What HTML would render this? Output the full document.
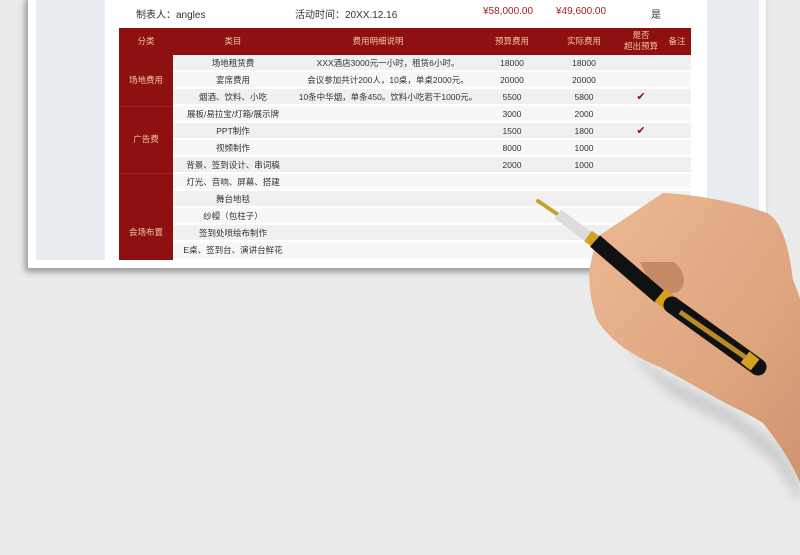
<!DOCTYPE html>
<html><head><meta charset="utf-8"><style>
*{margin:0;padding:0;box-sizing:border-box}
body{width:800px;height:555px;overflow:hidden;background:#ebebeb;position:relative;font-family:"Liberation Sans","Noto Sans CJK SC",sans-serif}
.a{position:absolute}
.paper{left:28px;top:-5px;width:738px;height:273px;background:#fff;box-shadow:-3px 4px 6px rgba(0,0,0,.35)}
.side{background:#e9edf1;top:0;height:260px}
.t{font-size:9px;color:#333;text-align:center;white-space:nowrap}
.hd{color:#f2c79c;font-size:8.5px;text-align:center;line-height:11px}
.row{left:173px;width:518px;height:16px;border-bottom:1px solid #fff}
.c{position:absolute;top:0;line-height:16px;font-size:8.5px;color:#333;text-align:center;white-space:nowrap}
.chk{color:#8e1010;font-size:11px}
</style></head><body>
<div class="a paper"></div>
<div class="a side" style="left:36px;width:69px"></div>
<div class="a side" style="left:707px;width:52px"></div>
<div class="a t" style="left:136px;top:6px;font-size:10px">制表人：angles</div>
<div class="a t" style="left:295px;top:6px;font-size:10px">活动时间：20XX.12.16</div>
<div class="a t" style="left:483px;top:6px;font-size:10px;color:#a52222">¥58,000.00</div>
<div class="a t" style="left:556px;top:6px;font-size:10px;color:#a52222">¥49,600.00</div>
<div class="a t" style="left:651px;top:6px;font-size:10px">是</div>
<div class="a" style="left:119px;top:28px;width:572px;height:27px;background:#8e1010"></div>
<div class="a" style="left:119px;top:55px;width:54px;height:205px;background:#8e1010"></div>
<div class="a" style="left:119px;top:106px;width:54px;height:1px;background:#a82020"></div>
<div class="a" style="left:119px;top:173px;width:54px;height:1px;background:#a82020"></div>
<div class="a hd" style="left:119px;top:36px;width:54px">分类</div>
<div class="a hd" style="left:173px;top:36px;width:120px">类目</div>
<div class="a hd" style="left:293px;top:36px;width:170px">费用明细说明</div>
<div class="a hd" style="left:480px;top:36px;width:64px">预算费用</div>
<div class="a hd" style="left:552px;top:36px;width:64px">实际费用</div>
<div class="a hd" style="left:616px;top:30px;width:50px">是否<br>超出预算</div>
<div class="a hd" style="left:664px;top:36px;width:26px">备注</div>
<div class="a hd" style="left:119px;top:75px;width:54px">场地费用</div>
<div class="a hd" style="left:119px;top:134px;width:54px">广告费</div>
<div class="a hd" style="left:119px;top:227px;width:54px">会场布置</div>
<div class="a" style="left:173px;top:55px">
<div class="row a" style="left:0;top:0;background:#f0f0f0"><span class="c" style="left:0;width:120px">场地租赁费</span><span class="c" style="left:120px;width:190px">XXX酒店3000元一小时，租赁6小时。</span><span class="c" style="left:307px;width:64px">18000</span><span class="c" style="left:379px;width:64px">18000</span></div>
<div class="row a" style="left:0;top:17px;background:#f7f7f7"><span class="c" style="left:0;width:120px">宴席费用</span><span class="c" style="left:120px;width:190px">会议参加共计200人，10桌，单桌2000元。</span><span class="c" style="left:307px;width:64px">20000</span><span class="c" style="left:379px;width:64px">20000</span></div>
<div class="row a" style="left:0;top:34px;background:#f0f0f0"><span class="c" style="left:0;width:120px">烟酒、饮料、小吃</span><span class="c" style="left:120px;width:190px">10条中华烟，单条450。饮料小吃若干1000元。</span><span class="c" style="left:307px;width:64px">5500</span><span class="c" style="left:379px;width:64px">5800</span><span class="c chk" style="left:443px;width:50px">✔</span></div>
<div class="row a" style="left:0;top:51px;background:#f7f7f7"><span class="c" style="left:0;width:120px">展板/易拉宝/灯箱/展示牌</span><span class="c" style="left:307px;width:64px">3000</span><span class="c" style="left:379px;width:64px">2000</span></div>
<div class="row a" style="left:0;top:68px;background:#f0f0f0"><span class="c" style="left:0;width:120px">PPT制作</span><span class="c" style="left:307px;width:64px">1500</span><span class="c" style="left:379px;width:64px">1800</span><span class="c chk" style="left:443px;width:50px">✔</span></div>
<div class="row a" style="left:0;top:85px;background:#f7f7f7"><span class="c" style="left:0;width:120px">视频制作</span><span class="c" style="left:307px;width:64px">8000</span><span class="c" style="left:379px;width:64px">1000</span></div>
<div class="row a" style="left:0;top:102px;background:#f0f0f0"><span class="c" style="left:0;width:120px">背景、签到设计、串词稿</span><span class="c" style="left:307px;width:64px">2000</span><span class="c" style="left:379px;width:64px">1000</span></div>
<div class="row a" style="left:0;top:119px;background:#f7f7f7"><span class="c" style="left:0;width:120px">灯光、音响、屏幕、搭建</span></div>
<div class="row a" style="left:0;top:136px;background:#f0f0f0"><span class="c" style="left:0;width:120px">舞台地毯</span></div>
<div class="row a" style="left:0;top:153px;background:#f7f7f7"><span class="c" style="left:0;width:120px">纱幔（包柱子）</span></div>
<div class="row a" style="left:0;top:170px;background:#f0f0f0"><span class="c" style="left:0;width:120px">签到处喷绘布制作</span></div>
<div class="row a" style="left:0;top:187px;background:#f7f7f7;height:18px"><span class="c" style="left:0;width:120px">E桌、签到台、演讲台鲜花</span></div>
</div>
<svg class="a" style="left:0;top:0" width="800" height="555" viewBox="0 0 800 555">
<defs>
<linearGradient id="sk" x1="0" y1="0" x2="1" y2="1"><stop offset="0" stop-color="#ebb892"/><stop offset=".6" stop-color="#dfa680"/><stop offset="1" stop-color="#cf9470"/></linearGradient>
<filter id="bl"><feGaussianBlur stdDeviation="5"/></filter>
</defs>
<path d="M620 345 L665 375 L735 412 L780 445 L800 480 L800 505 L775 465 L735 430 L670 395 Z" fill="#999" opacity=".35" filter="url(#bl)"/>
<path d="M600 235 C620 222 645 205 663 193 C700 195 740 203 767 213 C780 220 788 240 793 280 C797 290 800 297 800 300 L800 482 C790 460 780 445 763 423 C750 415 740 410 733 407 C710 395 685 380 660 367 C630 355 610 340 597 320 C590 300 588 280 590 267 C592 255 596 243 600 235 Z" fill="url(#sk)"/>
<path d="M640 262 C650 285 660 298 678 292 C688 284 684 270 674 262 Z" fill="#b77a5a" opacity=".7"/>
<path d="M538 201 L560 216" stroke="#c9a030" stroke-width="4" stroke-linecap="round"/>
<path d="M558 214 L590 238" stroke="#dcdcdc" stroke-width="11"/>
<path d="M588 236 L595 241" stroke="#d4a020" stroke-width="13"/>
<path d="M595 241 L660 297" stroke="#111" stroke-width="15"/>
<path d="M660 295 L672 305" stroke="#d4a020" stroke-width="17"/>
<path d="M672 305 L758 367" stroke="#111" stroke-width="17" stroke-linecap="round"/>
<path d="M680 312 L745 357" stroke="#b88a2a" stroke-width="5"/>
<path d="M745 357 L755 365" stroke="#d4a020" stroke-width="14"/>
</svg>
</body></html>
